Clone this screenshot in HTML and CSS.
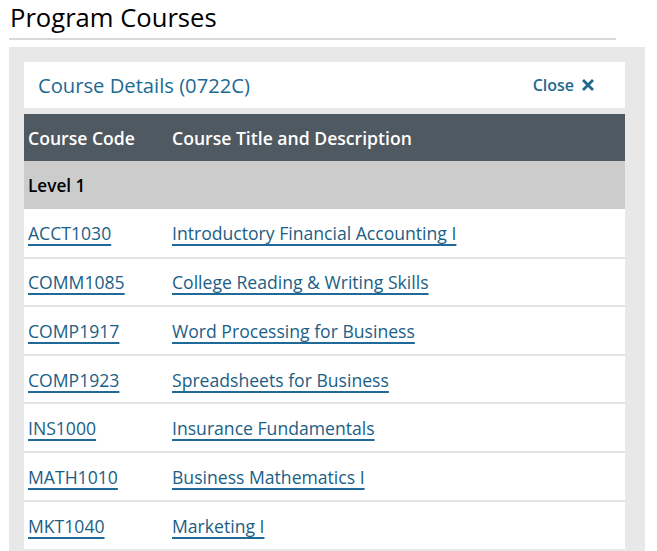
FILE: index.html
```html
<!DOCTYPE html>
<html lang="en">
<head>
<meta charset="utf-8">
<title>Program Courses</title>
<link rel="stylesheet" href="styles.css">
</head>
<body>
<div class="page">
  <h1 class="page-title">Program Courses</h1>
  <div class="panel">
    <div class="card">
      <div class="card-head">
        <span class="card-title">Course Details (0722C)</span>
        <a class="close" href="#">Close
          <svg class="close-icon" viewBox="0 0 12 12" width="12" height="12" aria-hidden="true">
            <path d="M2 2 L10 10 M10 2 L2 10" stroke="currentColor" stroke-width="2.8" stroke-linecap="square" fill="none"/>
          </svg>
        </a>
      </div>
      <table class="courses">
        <thead>
          <tr class="head-row">
            <th class="col-code">Course Code</th>
            <th class="col-title">Course Title and Description</th>
          </tr>
        </thead>
        <tbody>
          <tr class="level-row"><td colspan="2">Level 1</td></tr>
          <tr class="course-row"><td class="col-code"><a href="#">ACCT1030</a></td><td class="col-title"><a href="#">Introductory Financial Accounting I</a></td></tr>
          <tr class="course-row"><td class="col-code"><a href="#">COMM1085</a></td><td class="col-title"><a href="#">College Reading &amp; Writing Skills</a></td></tr>
          <tr class="course-row"><td class="col-code"><a href="#">COMP1917</a></td><td class="col-title"><a href="#">Word Processing for Business</a></td></tr>
          <tr class="course-row"><td class="col-code"><a href="#">COMP1923</a></td><td class="col-title"><a href="#">Spreadsheets for Business</a></td></tr>
          <tr class="course-row"><td class="col-code"><a href="#">INS1000</a></td><td class="col-title"><a href="#">Insurance Fundamentals</a></td></tr>
          <tr class="course-row"><td class="col-code"><a href="#">MATH1010</a></td><td class="col-title"><a href="#">Business Mathematics I</a></td></tr>
          <tr class="course-row"><td class="col-code"><a href="#">MKT1040</a></td><td class="col-title"><a href="#">Marketing I</a></td></tr>
        </tbody>
      </table>
    </div>
  </div>
</div>
</body>
</html>
```
FILE: styles.css
```css
html, body {
  margin: 0;
  padding: 0;
  background: #ffffff;
}
body {
  font-family: "Open Sans", "Liberation Sans", sans-serif;
  color: #000;
  overflow: hidden;
}
.page {
  padding-left: 9px;
}
.page-title {
  margin: 0;
  width: 607px;
  font-size: 25.6px;
  font-weight: 400;
  line-height: 36px;
  padding-left: 1px;
  padding-bottom: 2px;
  border-bottom: 2px solid #d9d9d9;
  box-sizing: border-box;
  height: 40px;
}
.panel {
  margin-top: 7px;
  width: 636px;
  background: #e8e8e8;
  padding: 15px 20px 20px 15px;
  box-sizing: border-box;
}
.card-head {
  background: #ffffff;
  height: 46px;
  display: flex;
  align-items: center;
  justify-content: space-between;
  padding: 0 31px 0 14px;
  margin-bottom: 6px;
}
.card-title {
  font-size: 20.2px;
  color: #1c6a93;
}
.close {
  font-size: 16px;
  font-weight: 600;
  color: #1f6a8f;
  text-decoration: none;
  display: flex;
  align-items: center;
  gap: 8px;
}
.close-icon {
  display: block;
}
.courses {
  width: 100%;
  border-collapse: collapse;
  background: #ffffff;
}
.courses th,
.courses td {
  padding: 0 4px;
  text-align: left;
  font-size: 17.6px;
  vertical-align: middle;
}
.col-code {
  width: 136px;
}
.head-row {
  background: #4f5961;
  height: 47px;
}
.head-row th {
  color: #ffffff;
  font-weight: 600;
}
.level-row {
  background: #cccccc;
  height: 48px;
}
.level-row td {
  font-weight: 600;
  font-size: 17.2px;
}
.course-row {
  height: 48.6px;
  border-top: 2px solid #e2e2e2;
}
.level-row + .course-row {
  border-top: none;
}
.course-row td {
  padding-top: 1px;
}
.course-row a {
  color: #1b5e86;
  text-decoration: underline;
  text-decoration-color: #1f6a99;
  text-decoration-thickness: 2px;
  text-underline-offset: 4px;
  text-decoration-skip-ink: none;
}
```
